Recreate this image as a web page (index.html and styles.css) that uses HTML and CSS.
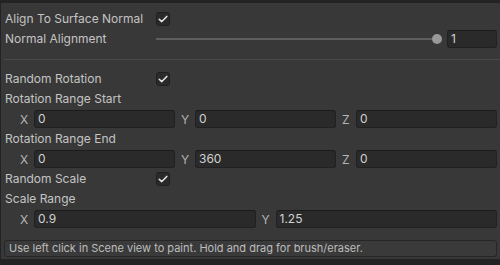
FILE: index.html
```html
<!DOCTYPE html>
<html>
<head>
<meta charset="utf-8">
<link rel="stylesheet" href="styles.css">
</head>
<body>
<div class="panel">
  <div class="row">
    <div class="label">Align To Surface Normal</div>
    <div class="field"><span class="check"><svg width="10" height="8" viewBox="0 0 10 8"><polyline points="1.2,4.2 3.8,6.6 8.8,1.4" fill="none" stroke="#e8e8e8" stroke-width="1.5" stroke-linecap="round" stroke-linejoin="round"/></svg></span></div>
  </div>
  <div class="row">
    <div class="label">Normal Alignment</div>
    <div class="field slider-field">
      <div class="slider"><div class="track"></div><div class="knob"></div></div>
      <div class="input small">1</div>
    </div>
  </div>
  <div class="sep"></div>
  <div class="row">
    <div class="label">Random Rotation</div>
    <div class="field"><span class="check"><svg width="10" height="8" viewBox="0 0 10 8"><polyline points="1.2,4.2 3.8,6.6 8.8,1.4" fill="none" stroke="#e8e8e8" stroke-width="1.5" stroke-linecap="round" stroke-linejoin="round"/></svg></span></div>
  </div>
  <div class="row"><div class="label">Rotation Range Start</div></div>
  <div class="row multi three">
    <div class="axis"><span class="axl">X</span><div class="input">0</div></div>
    <div class="axis"><span class="axl">Y</span><div class="input">0</div></div>
    <div class="axis"><span class="axl">Z</span><div class="input">0</div></div>
  </div>
  <div class="row"><div class="label">Rotation Range End</div></div>
  <div class="row multi three">
    <div class="axis"><span class="axl">X</span><div class="input">0</div></div>
    <div class="axis"><span class="axl">Y</span><div class="input">360</div></div>
    <div class="axis"><span class="axl">Z</span><div class="input">0</div></div>
  </div>
  <div class="row">
    <div class="label">Random Scale</div>
    <div class="field"><span class="check"><svg width="10" height="8" viewBox="0 0 10 8"><polyline points="1.2,4.2 3.8,6.6 8.8,1.4" fill="none" stroke="#e8e8e8" stroke-width="1.5" stroke-linecap="round" stroke-linejoin="round"/></svg></span></div>
  </div>
  <div class="row"><div class="label">Scale Range</div></div>
  <div class="row multi two">
    <div class="axis"><span class="axl">X</span><div class="input">0.9</div></div>
    <div class="axis"><span class="axl">Y</span><div class="input">1.25</div></div>
  </div>
  <div class="help">Use left click in Scene view to paint. Hold and drag for brush/eraser.</div>
</div>
</body>
</html>
```
FILE: styles.css
```css
html, body {
  margin: 0;
  padding: 0;
  background: #232323;
  width: 500px;
  height: 265px;
  overflow: hidden;
}
body {
  font-family: Inter, "Liberation Sans", sans-serif;
  font-size: 12px;
  color: #c4c4c4;
}
.panel {
  margin: 3px 0 0 1px;
  background: #383838;
  padding: 7px 3px 2px 3px;
  display: flex;
  flex-direction: column;
  gap: 2px;
}
.row {
  height: 18px;
  display: flex;
  align-items: center;
}
.label {
  width: 152px;
  flex: none;
  padding-left: 1px;
  box-sizing: border-box;
  white-space: nowrap;
  line-height: 18px;
}
.field {
  flex: 1;
  display: flex;
  align-items: center;
  height: 18px;
}
.check {
  width: 12px;
  height: 12px;
  border: 1px solid #1f1f1f;
  background: #2a2a2a;
  border-radius: 3px;
  display: flex;
  align-items: center;
  justify-content: center;
}
.slider-field {
  gap: 5px;
}
.slider {
  flex: 1;
  height: 18px;
  display: flex;
  align-items: center;
}
.track {
  flex: 1;
  height: 2px;
  background: #5e5e5e;
}
.knob {
  width: 10px;
  height: 10px;
  border-radius: 50%;
  background: #999999;
  flex: none;
}
.input {
  flex: 1;
  height: 18px;
  box-sizing: border-box;
  background: #2a2a2a;
  border: 1px solid #212121;
  border-top-color: #1b1b1b;
  border-radius: 3px;
  padding-left: 3px;
  line-height: 16px;
  color: #d2d2d2;
  white-space: nowrap;
  overflow: hidden;
}
.input.small {
  flex: none;
  width: 50px;
}
.multi {
  padding-left: 14px;
  display: grid;
  gap: 4px;
  align-items: stretch;
}
.multi.three { grid-template-columns: 1fr 1fr 1fr; }
.multi.two { grid-template-columns: 1fr 1fr; }
.axis {
  display: flex;
  align-items: center;
  min-width: 0;
}
.axl {
  width: 16px;
  flex: none;
  padding-left: 2px;
  box-sizing: border-box;
  color: #b4b4b4;
}
.sep {
  height: 1px;
  background: #4a4a4a;
  margin: 9px -3px 8px 0;
}
.help {
  margin-top: 10px;
  height: 17px;
  box-sizing: border-box;
  border: 1px solid #262626;
  border-radius: 3px;
  background: #3a3a3a;
  font-size: 11px;
  line-height: 15px;
  padding-left: 4px;
  color: #bdbdbd;
  white-space: nowrap;
}
```
